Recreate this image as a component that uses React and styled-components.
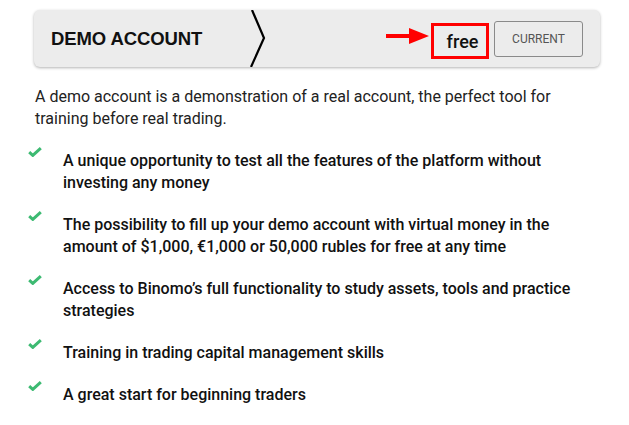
import * as React from "react";
import styled, { createGlobalStyle } from "styled-components";

const GlobalStyle = createGlobalStyle`
  body {
    margin: 0;
    background: #fff;
    font-family: Roboto, "Liberation Sans", Arial, sans-serif;
  }
`;

const Page = styled.div`
  width: 566px;
  padding: 10px 0 0 34px;
`;

const Header = styled.div`
  display: flex;
  align-items: center;
  height: 57px;
  background: #ececec;
  border-radius: 6px;
  box-shadow: 0 1px 3px rgba(0, 0, 0, 0.3);
  padding-right: 17px;
`;

const Title = styled.h2`
  width: 199px;
  margin: 0;
  padding-left: 17px;
  font-family: "Liberation Sans", Arial, sans-serif;
  font-size: 18.5px;
  font-weight: 700;
  color: #111;
  letter-spacing: -0.1px;
`;

const Chevron = styled.svg`
  display: block;
  width: 16px;
  height: 57px;
  flex-shrink: 0;
`;

const Spacer = styled.div`
  flex: 1;
`;

const Pointer = styled.svg`
  display: block;
  width: 44px;
  height: 16px;
  margin-top: -5px;
  margin-right: 1px;
`;

const PriceBox = styled.div`
  box-sizing: border-box;
  display: flex;
  align-items: center;
  justify-content: center;
  width: 58px;
  height: 36px;
  margin-top: 5px;
  padding-left: 5px;
  border: 3px solid #ff0000;
  font-size: 18px;
  font-weight: 500;
  color: #111;
`;

const StatusButton = styled.button`
  box-sizing: border-box;
  width: 89px;
  height: 36px;
  margin-left: 5px;
  background: transparent;
  border: 1px solid #8a8a8a;
  border-radius: 3px;
  font-family: Roboto, sans-serif;
  font-size: 12px;
  color: #555;
  text-transform: uppercase;
`;

const Intro = styled.p`
  margin: 19px 0 0 1px;
  font-size: 16px;
  line-height: 22px;
  color: #222;
`;

const Features = styled.ul`
  list-style: none;
  margin: 20px 0 0 -6px;
  padding: 0;
`;

const Feature = styled.li`
  display: flex;
  align-items: flex-start;
  font-size: 16px;
  font-weight: 500;
  line-height: 22px;
  color: #111;

  & + & {
    margin-top: 20px;
  }
`;

const Tick = styled.svg`
  display: block;
  flex-shrink: 0;
  width: 14px;
  height: 10px;
  margin: -3px 21px 0 0;
`;

const CheckMark = () => (
  <Tick viewBox="0 0 14 10">
    <path
      d="M1.2 5.2 L4.8 8.4 L12.8 1.2"
      fill="none"
      stroke="#3dba72"
      strokeWidth="3"
    />
  </Tick>
);

const features = [
  "A unique opportunity to test all the features of the platform without investing any money",
  "The possibility to fill up your demo account with virtual money in the amount of $1,000, €1,000 or 50,000 rubles for free at any time",
  "Access to Binomo’s full functionality to study assets, tools and practice strategies",
  "Training in trading capital management skills",
  "A great start for beginning traders",
];

const App = () => {
  return (
    <Page>
      <GlobalStyle />
      <Header>
        <Title>DEMO ACCOUNT</Title>
        <Chevron viewBox="0 0 16 57">
          <polyline
            points="2,0 14,28 1,57"
            fill="none"
            stroke="#000"
            strokeWidth="2.2"
          />
        </Chevron>
        <Spacer />
        <Pointer viewBox="0 0 44 16">
          <rect x="0" y="6" width="25" height="4" fill="#ff0000" />
          <polygon points="23,0 43,8 23,16" fill="#ff0000" />
        </Pointer>
        <PriceBox>free</PriceBox>
        <StatusButton>Current</StatusButton>
      </Header>
      <Intro>
        A demo account is a demonstration of a real account, the perfect tool
        for training before real trading.
      </Intro>
      <Features>
        {features.map((text) => (
          <Feature key={text}>
            <CheckMark />
            <span>{text}</span>
          </Feature>
        ))}
      </Features>
    </Page>
  );
};

export default App;
